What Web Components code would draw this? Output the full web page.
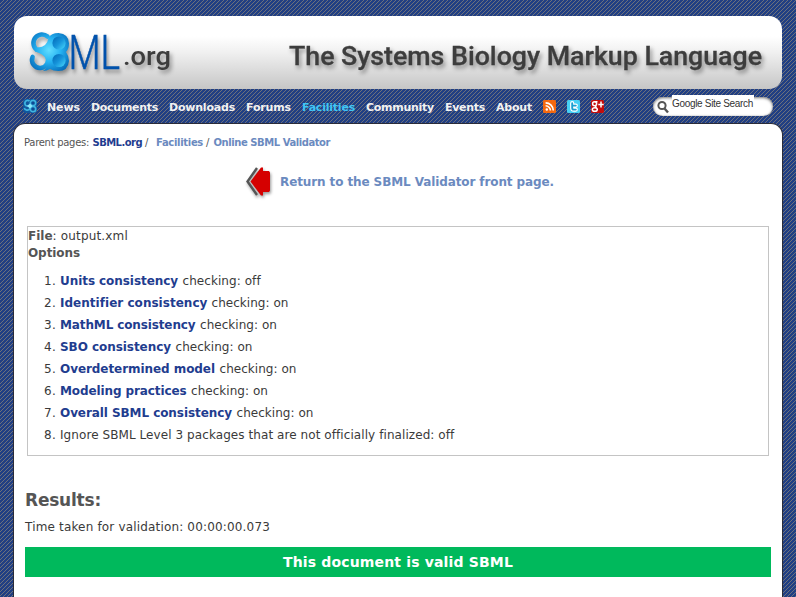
<!DOCTYPE html>
<html lang="en">
<head>
<meta charset="utf-8">
<title>Online SBML Validator</title>
<style>
html,body{margin:0;height:100%}
body{overflow:hidden;font-family:"DejaVu Sans",Verdana,sans-serif;color:#3a3a3a;font-size:12px}
</style>
</head>
<body>
<sbml-page>
  <sbml-header slot="header"></sbml-header>
  <sbml-nav slot="nav"></sbml-nav>
  <sbml-crumbs></sbml-crumbs>
  <return-link></return-link>
  <validator-options>
    <option-row n="1" label="Units consistency" w="118" rest="checking: off" rw="78"></option-row>
    <option-row n="2" label="Identifier consistency" w="147" rest="checking: on" rw="77"></option-row>
    <option-row n="3" label="MathML consistency" w="135.5" rest="checking: on" rw="77"></option-row>
    <option-row n="4" label="SBO consistency" w="111" rest="checking: on" rw="77"></option-row>
    <option-row n="5" label="Overdetermined model" w="155" rest="checking: on" rw="77"></option-row>
    <option-row n="6" label="Modeling practices" w="126.5" rest="checking: on" rw="77"></option-row>
    <option-row n="7" label="Overall SBML consistency" w="172" rest="checking: on" rw="77"></option-row>
    <option-row n="8" rest="Ignore SBML Level 3 packages that are not officially finalized: off" rw="394"></option-row>
  </validator-options>
  <validation-results></validation-results>
</sbml-page>
<script>
const define = (name, html) => customElements.define(name, class extends HTMLElement {
  constructor() { super(); this.attachShadow({mode:'open'}).innerHTML = html; }
});

// Inline text whose tracking is adjusted so that it fills the width in "w".
customElements.define('fit-text', class extends HTMLElement {
  connectedCallback() {
    if (this.shadowRoot) return;
    this.attachShadow({mode:'open'}).innerHTML =
      '<style>:host{display:inline-block;white-space:pre;flex:none}span{display:inline-block;white-space:pre}</style><span></span>';
    const s = this.shadowRoot.querySelector('span');
    s.textContent = this.getAttribute('t');
    const w = parseFloat(this.getAttribute('w'));
    const nat = s.getBoundingClientRect().width;
    if (nat && w) { s.style.letterSpacing = ((w - nat) / s.textContent.length) + 'px'; this.style.width = w + 'px'; }
  }
});

const stripe = "url(\"data:image/svg+xml,%3Csvg xmlns='http://www.w3.org/2000/svg' width='4' height='4' shape-rendering='crispEdges'%3E%3Crect width='4' height='4' fill='%23213f83'/%3E%3Cpath d='M0 3h1v1H0zM1 2h1v1H1zM2 1h1v1H2zM3 0h1v1H3z' fill='%236c707c'/%3E%3C/svg%3E\")";
define('sbml-page', `<style>
:host{display:flex;flex-direction:column;height:597px;box-sizing:border-box;padding:16px 13px 0;background:${stripe}}
main{flex:1;display:flex;flex-direction:column;background:#fff;border:1px solid #2a2c38;border-bottom:0;border-radius:12px 12px 0 0}
</style><slot name="header"></slot><slot name="nav"></slot><main><slot></slot></main>`);

define('sbml-header', `<style>
:host{display:flex;justify-content:space-between;height:73px;margin:0 1px;border-radius:13px;background:linear-gradient(#fff 28%,#f0f0f0 50%,#c6c6c6)}
svg{display:block}
.sh{filter:drop-shadow(2px 3px 2px rgba(0,0,0,.38))}
</style>
<svg width="170" height="73" viewBox="14 16 170 73">
 <defs>
  <radialGradient id="g" gradientUnits="userSpaceOnUse" cx="49" cy="50" r="26"><stop offset="0" stop-color="#62deff"/><stop offset=".45" stop-color="#26b3f2"/><stop offset="1" stop-color="#0264b4"/></radialGradient>
  <linearGradient id="h" x1="0" y1="0" x2="1" y2="1"><stop stop-color="#0067b4"/><stop offset=".5" stop-color="#1593da"/><stop offset="1" stop-color="#4ad9fc"/></linearGradient>
 </defs>
 <g class="sh">
  <path d="M47.500 36.500A8.300 8.300 0 1 0 36.500 49.500Q44 51 47 56A8 8 0 1 1 32.600 57" fill="none" stroke="url(#g)" stroke-width="4.600" stroke-linecap="round"/>
  <path d="M48.500 38Q51 33 58.500 33Q69 34 69 43.500Q69 49 66 52Q69 56 69 61Q68 71 58.500 71Q53 71 50 69Q47 71 43 71Q49 67 47 59.500Q43 53.500 35 51.500L38 47.500Q47 47 48.500 38Z" fill="url(#g)"/>
 </g>
 <circle cx="59" cy="43" r="6.600" fill="url(#h)"/><circle cx="59" cy="60.500" r="6.600" fill="url(#h)"/>
 <text class="sh" transform="translate(68.500 69) scale(.78 1)" font-family="Roboto,sans-serif" font-weight="300" font-size="47.500" fill="#0052ac" stroke="#0052ac" stroke-width=".6">ML</text>
 <text class="sh" x="123" y="65" font-family="Roboto,sans-serif" font-weight="500" font-size="26" textLength="48" lengthAdjust="spacingAndGlyphs" fill="#3d3d3d">.org</text>
</svg>
<svg width="500" height="73" viewBox="282 16 500 73">
 <text class="sh" x="289" y="65" font-family="Roboto,sans-serif" font-weight="500" font-size="26" textLength="473" lengthAdjust="spacingAndGlyphs" fill="#3d3d3d" stroke="#3d3d3d" stroke-width=".3">The Systems Biology Markup Language</text>
</svg>`);

define('site-search', `<style>
:host{display:flex;width:120px;height:19px;box-sizing:border-box;border-radius:10px;background:#fff;box-shadow:inset 0 1px 3px #777,inset 0 0 1px #999;padding-left:4px;gap:3px}
svg{margin-top:3px}
div{width:82px;height:18px;margin-top:-2px;background:#fff;font:10px/18px "Liberation Sans",Arial,sans-serif;color:#333}
</style><svg width="12" height="14" viewBox="0 0 12 14"><circle cx="5" cy="5.500" r="3.600" fill="none" stroke="#555" stroke-width="2"/><path d="M7.500 8.500L11 12.500" stroke="#555" stroke-width="2.400"/></svg><div><fit-text t="Google Site Search" w="81"></fit-text></div>`);

define('sbml-nav', `<style>
:host{display:flex;align-items:center;height:34px;box-sizing:border-box;padding:0 10px;color:#f2f2f2;font-size:11px;font-weight:bold}
nav{display:flex;align-items:center;gap:11px}
.logo{margin-right:-1px}
nav fit-text{padding-top:2px}
.on{color:#3fc5f5}
site-search{margin-left:auto}
svg{display:block}
</style>
<nav>
<svg class="logo" width="14" height="14" viewBox="0 0 14 14"><rect width="14" height="14" rx="3" fill="#12579c"/><g fill="none" stroke="#3fb4e0" stroke-width="1.700"><path d="M6.500 2A2.800 2.800 0 1 0 3 6.600L7 7.400A2.900 2.900 0 1 1 1.300 9"/><circle cx="10" cy="4" r="2.700" fill="#0d4a94"/><circle cx="10" cy="10" r="2.700" fill="#0d4a94"/></g><path d="M4 7L7 4.500L9.500 7L7 9.500Z" fill="#8be5fa"/></svg>
<fit-text t="News" w="33"></fit-text><fit-text t="Documents" w="67"></fit-text><fit-text t="Downloads" w="66"></fit-text><fit-text t="Forums" w="45"></fit-text><fit-text class="on" t="Facilities" w="53"></fit-text><fit-text t="Community" w="68"></fit-text><fit-text t="Events" w="40"></fit-text><fit-text t="About" w="36"></fit-text>
<svg width="13" height="13" viewBox="0 0 13 13"><rect width="13" height="13" rx="1.500" fill="#f5680f"/><circle cx="3.800" cy="9.500" r="1.200" fill="#fff"/><path d="M2.600 5.800A4.800 4.800 0 0 1 7.400 10.600M2.600 2.900A7.700 7.700 0 0 1 10.300 10.600" fill="none" stroke="#fff" stroke-width="1.600"/></svg>
<svg width="13" height="13" viewBox="0 0 13 13"><rect width="13" height="13" rx="1.500" fill="#45d0f5"/><path d="M5.200 3.200V8Q5.200 9.600 6.700 9.600H8.800M5.200 5.600H8.800" fill="none" stroke="#fff" stroke-width="4.200" stroke-linecap="round" stroke-linejoin="round"/><path d="M5.200 3.200V8Q5.200 9.600 6.700 9.600H8.800M5.200 5.600H8.800" fill="none" stroke="#1b9fd0" stroke-width="1.900" stroke-linecap="round"/></svg>
<svg width="13" height="13" viewBox="0 0 13 13"><rect width="13" height="13" rx="1.500" fill="#c40c0c"/><g fill="none" stroke="#fff" stroke-width="1.500"><circle cx="3.600" cy="3.800" r="2"/><path d="M3.600 1.700H6.500M5 5.500Q4 7 5.500 8"/><ellipse cx="3.800" cy="9.500" rx="2.500" ry="1.800"/><path d="M10 1.500V7.500M7.300 4.500H12.700"/></g></svg>
</nav><site-search></site-search>`);

define('sbml-crumbs', `<style>
:host{display:flex;height:35px;padding-left:10px;font-size:10px;line-height:38px;color:#555}
b{color:#1f3d8f}.l{color:#6b8abf}
.a{margin-left:3.500px}.b{margin-left:3px}.c{margin-left:7px}
</style><fit-text t="Parent pages:" w="65"></fit-text><b class="a"><fit-text t="SBML.org" w="49.500"></fit-text></b><span class="b"><fit-text t="/" w="4"></fit-text></span><b class="l c"><fit-text t="Facilities" w="47"></fit-text></b><span class="b"><fit-text t="/" w="4"></fit-text></span><b class="l a"><fit-text t="Online SBML Validator" w="116.500"></fit-text></b>`);

define('return-link', `<style>
:host{display:flex;height:44px;padding:1px 0 0 228px;align-items:center;box-sizing:border-box;font-weight:bold;color:#6b8abf}
svg{margin-right:3px;margin-top:-2px}
</style><svg width="35" height="40" viewBox="242 161 35 40"><g style="filter:drop-shadow(1px 2px 1.500px rgba(0,0,0,.4))"><path d="M257 168L247.500 181.500L257 195" fill="none" stroke="#555" stroke-width="2.400"/><path d="M250.500 181.500L261 167.500H263V171H269L270 172.500V190.500L269 192H263V195.500H261Z" fill="#d50000"/></g></svg><fit-text t="Return to the SBML Validator front page." w="274"></fit-text>`);

define('validator-options', `<style>
:host{display:block;height:230px;box-sizing:border-box;margin:23px 13px 0 13px;border:1px solid #c4c4c4}
div{height:17px;line-height:18px;display:flex}
b{color:#555}
section{margin-top:9px}
</style><div><b><fit-text t="File" w="24.500"></fit-text></b><fit-text t=": output.xml" w="75.500"></fit-text></div><div><b><fit-text t="Options" w="52"></fit-text></b></div><section><slot></slot></section>`);

customElements.define('option-row', class extends HTMLElement {
  connectedCallback() {
    const a = k => this.getAttribute(k);
    this.attachShadow({mode:'open'}).innerHTML = `<style>:host{display:flex;height:22px;line-height:22px;padding-left:16px}b{color:#1f3d8f;margin-right:4.500px}i{font-style:normal;width:16px}</style><i><fit-text t="${a('n')}." w="12"></fit-text></i>${a('label') ? `<b><fit-text t="${a('label')}" w="${a('w')}"></fit-text></b>` : ''}<fit-text t="${a('rest')}" w="${a('rw')}"></fit-text>`;
  }
});

define('validation-results', `<style>
:host{display:block;padding:31px 11px 0 11px}
h2{margin:0;font-size:17px;line-height:26px;height:26px;color:#555}
p{margin:4px 0 0;height:30px;line-height:20px}
div{height:30px;line-height:30px;background:#00b95c;color:#fff;font-weight:bold;font-size:14px;display:flex;justify-content:center}
</style><h2><fit-text t="Results:" w="76"></fit-text></h2><p><fit-text t="Time taken for validation: 00:00:00.073" w="245"></fit-text></p><div><fit-text t="This document is valid SBML" w="230"></fit-text></div>`);
</script>
</body>
</html>
